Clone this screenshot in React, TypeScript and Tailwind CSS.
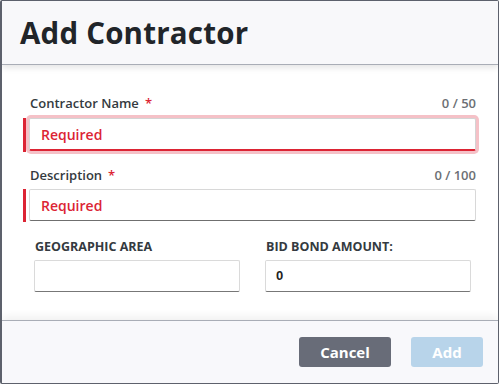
const Req = () => <span className="ml-[6px] text-[#dc2434]">*</span>;

type ErrFieldProps = {
  label: string;
  max: number;
  focused?: boolean;
};

const ErrField = ({ label, max, focused }: ErrFieldProps) => {
  return (
    <div>
      <div className="flex h-[18px] items-center justify-between pl-[7px] text-[13px] font-semibold leading-[18px]">
        <span className="text-[#343a40]">
          {label}
          <Req />
        </span>
        <span className="text-[#6c6f74]">0 / {max}</span>
      </div>
      <div className={focused ? "mt-[6px] flex" : "mt-[5px] flex"}>
        <div className={focused ? "h-[34px] w-[3px] bg-[#dc2434]" : "h-[33px] w-[3px] bg-[#dc2434]"} />
        <div
          className={
            focused
              ? "ml-[3px] flex h-[33px] flex-1 items-center rounded-[2px] border border-b-2 border-[#d4d4d4] border-b-[#dc2434] bg-white pl-[11px] text-[14px] font-semibold text-[#dc2434] ring-[3px] ring-[#f5c1c7]"
              : "ml-[3px] flex h-[32px] flex-1 items-center rounded-[2px] border border-[#d8d8d8] border-b-[#6f6f6f] bg-white pl-[11px] text-[14px] font-semibold text-[#dc2434]"
          }
        >
          Required
        </div>
      </div>
    </div>
  );
};

const SmallField = ({ label, value }: { label: string; value?: string }) => {
  return (
    <div>
      <div className="h-[18px] pl-[1px] text-[12.5px] font-bold leading-[18px] text-[#343a40]">{label}</div>
      <div className="mt-[4px] flex h-[32px] items-center rounded-[2px] border border-[#dadada] border-b-[#777] bg-white pl-[10px] text-[13px] font-bold text-[#222] [font-family:'Liberation_Sans',sans-serif]">
        {value}
      </div>
    </div>
  );
};

export default function App() {
  return (
    <div className="flex h-[384px] w-[499px] flex-col overflow-hidden rounded-[2px] border border-l-2 border-[#5d616c] bg-white [font-family:'Open_Sans',sans-serif]">
      <header className="relative z-10 flex h-[64px] shrink-0 items-center border-b border-[#a9adb6] bg-[#f8f8fa] pl-[18px] shadow-[0_3px_6px_rgba(0,0,0,0.10)]">
        <h1 className="text-[29.5px] font-bold leading-none tracking-[0.2px] text-[#212529]">Add Contractor</h1>
      </header>

      <main className="flex-1 pt-[29px]">
        <div className="ml-[21px] mr-[22px]">
          <ErrField label="Contractor Name" max={50} focused />
          <div className="mt-[14px]">
            <ErrField label="Description" max={100} />
          </div>
        </div>
        <div className="mt-[16px] grid grid-cols-2 gap-[25px] pl-[32px] pr-[27px]">
          <SmallField label="GEOGRAPHIC AREA" />
          <SmallField label="BID BOND AMOUNT:" value="0" />
        </div>
      </main>

      <footer className="relative flex h-[63px] shrink-0 items-center justify-end gap-[20px] border-t border-[#a9adb6] bg-[#f8f8fb] pr-[15px] shadow-[0_-4px_8px_rgba(0,0,0,0.06)]">
        <button className="h-[30px] w-[92px] rounded-[3px] bg-[#686c78] text-[15px] font-bold text-white">Cancel</button>
        <button className="h-[30px] w-[72px] rounded-[3px] bg-[#b8d4ea] text-[15px] font-bold text-white">Add</button>
      </footer>
    </div>
  );
}
